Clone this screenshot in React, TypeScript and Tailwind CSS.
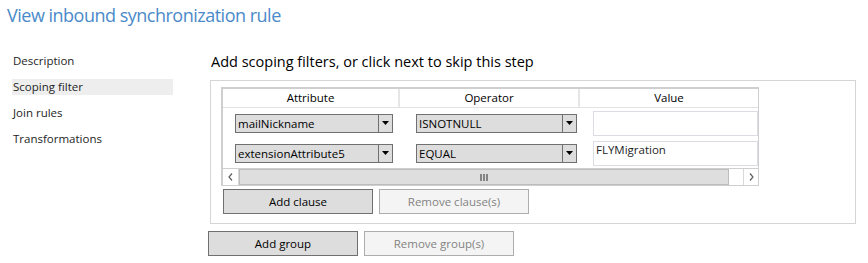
import React from 'react';

const navItems = ['Description', 'Scoping filter', 'Join rules', 'Transformations'];

const clauses = [
  { attribute: 'mailNickname', operator: 'ISNOTNULL', value: '' },
  { attribute: 'extensionAttribute5', operator: 'EQUAL', value: 'FLYMigration' },
];

function Combo({ text, width }: { text: string; width: string }) {
  return (
    <div className={`flex h-[19px] ${width} border border-[#707070] bg-[#dddddd]`}>
      <div className="flex-1 truncate pl-[2px] text-[11.5px] leading-[17px] text-black">{text}</div>
      <div className="flex w-[14px] items-center justify-center border-l border-[#707070]">
        <svg width="7" height="4" viewBox="0 0 7 4">
          <path d="M0 0h7L3.5 4z" fill="#000" />
        </svg>
      </div>
    </div>
  );
}

function Button({ label, disabled }: { label: string; disabled?: boolean }) {
  return (
    <button
      disabled={disabled}
      className={
        disabled
          ? 'h-[25px] w-[150px] border border-[#adadad] bg-[#f4f4f4] text-[11.5px] text-[#838383]'
          : 'h-[25px] w-[150px] border border-[#707070] bg-[#dddddd] text-[11.5px] text-black'
      }
    >
      {label}
    </button>
  );
}

export default function App() {
  return (
    <div className="h-[263px] w-[868px] overflow-hidden bg-white font-['Open_Sans',sans-serif] text-[#1e1e1e]">
      <h1 className="pl-[7px] pt-[2px] text-[18px] leading-[26px] tracking-[-0.5px] text-[#4a8ac9]">
        View inbound synchronization rule
      </h1>

      <div className="mt-[25px] flex">
        {/* left nav */}
        <div className="ml-[12px] flex w-[161px] flex-col gap-[10px]">
          {navItems.map((item) => (
            <div
              key={item}
              className={`h-[16px] pl-[1px] text-[11.5px] leading-[16px] ${
                item === 'Scoping filter' ? 'bg-[#eeeeee]' : ''
              }`}
            >
              {item}
            </div>
          ))}
        </div>

        {/* main */}
        <div className="ml-[35px] mt-[-1px] flex flex-col">
          <div className="pl-[3px] text-[14.5px] leading-[20px] text-black">
            Add scoping filters, or click next to skip this step
          </div>

          <div className="ml-[2px] mt-[8px] w-[646px] border border-[#d5d5d5] pb-[9px] pl-[10px] pt-[6px]">
            {/* grid */}
            <div className="w-[538px] border-2 border-r-[1.5px] border-[#cfcfcf] border-b-0">
              <div className="flex h-[19px] border-b border-[#e3e3e3] text-[11.5px] leading-[18px] text-black">
                <div className="w-[177px] border-r-2 border-[#e6e6e6] text-center">Attribute</div>
                <div className="w-[180px] border-r-2 border-[#e6e6e6] text-center">Operator</div>
                <div className="flex-1 text-center">Value</div>
              </div>

              {clauses.map((c) => (
                <div key={c.attribute} className="flex h-[30px] items-center">
                  <div className="w-[179px] pl-[12px]">
                    <Combo text={c.attribute} width="w-[158px]" />
                  </div>
                  <div className="w-[180px] pl-[14px]">
                    <Combo text={c.operator} width="w-[161px]" />
                  </div>
                  <div className="pl-[11px]">
                    <div className="h-[25px] w-[165px] border border-[#dcdce4] px-[2px] text-[11.5px] leading-[16px] text-[#1e1e1e]">
                      {c.value}
                    </div>
                  </div>
                </div>
              ))}

              {/* horizontal scrollbar */}
              <div className="flex h-[18px] border-y border-[#cfcfcf] bg-white">
                <div className="flex w-[16px] items-center justify-center border-r border-[#d8d8d8]">
                  <svg width="5" height="8" viewBox="0 0 5 8">
                    <path d="M4 0.5L1 4l3 3.5" stroke="#606060" strokeWidth="1.2" fill="none" />
                  </svg>
                </div>
                <div className="flex w-[490px] items-center justify-center border border-[#bcbcbc] bg-[#dedede]">
                  <svg width="8" height="7" viewBox="0 0 8 7">
                    <path d="M1 0v7M4 0v7M7 0v7" stroke="#606060" strokeWidth="1.4" />
                  </svg>
                </div>
                <div className="w-[14px]" />
                <div className="flex flex-1 items-center justify-center border-l border-[#d8d8d8]">
                  <svg width="5" height="8" viewBox="0 0 5 8">
                    <path d="M1 0.5L4 4 1 7.5" stroke="#606060" strokeWidth="1.2" fill="none" />
                  </svg>
                </div>
              </div>
            </div>

            <div className="mt-[3px] flex gap-[6px] pl-[2px]">
              <Button label="Add clause" />
              <Button label="Remove clause(s)" disabled />
            </div>
          </div>

          <div className="mt-[7px] flex gap-[6px]">
            <Button label="Add group" />
            <Button label="Remove group(s)" disabled />
          </div>
        </div>
      </div>
    </div>
  );
}
